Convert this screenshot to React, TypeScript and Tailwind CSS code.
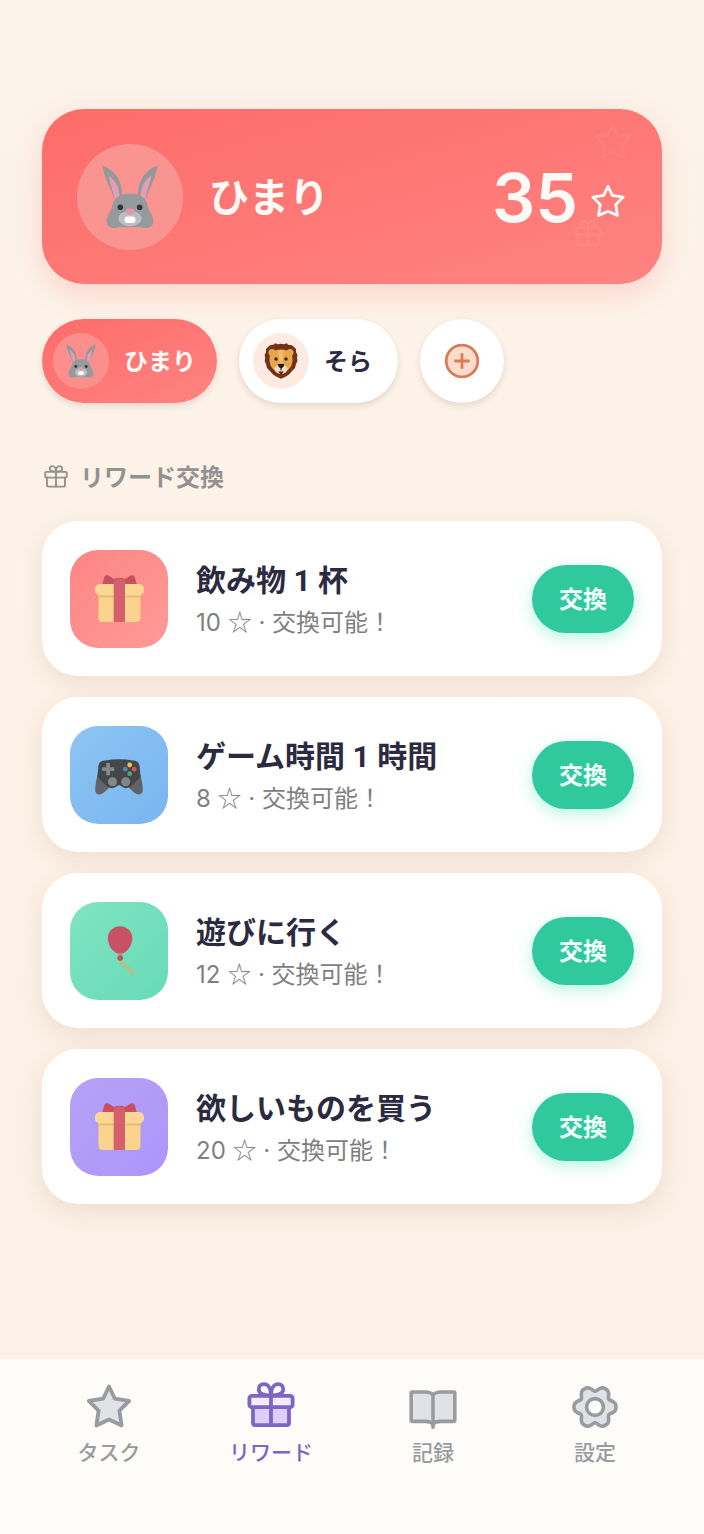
import clsx from 'clsx'
import { ReactNode, useState } from 'react'

type IconProps = { className?: string }

const STAR =
  'M24 4.5 L29.8 16.6 L44.2 18.8 L34.4 28.6 L36.6 43.4 L24 37.6 L11.4 43.4 L13.6 28.6 L3.8 18.8 L18.2 16.6 Z'

// six soft teeth around the hub
const GEAR =
  'M' +
  Array.from({ length: 120 }, (_, i) => {
    const t = (i / 120) * Math.PI * 2
    const c = Math.cos(6 * t)
    const r = 18.4 + 2.6 * c + 0.9 * (1 - c * c)
    return `${(24 + r * Math.cos(t)).toFixed(2)} ${(25 + r * Math.sin(t)).toFixed(2)}`
  }).join('L') +
  'Z'

function StarIcon({ className }: IconProps) {
  return (
    <svg viewBox="0 0 48 48" className={className} aria-hidden="true" stroke="currentColor" strokeWidth="3.8" strokeLinejoin="round">
      <path d={STAR} />
    </svg>
  )
}

function GiftIcon({ className, lid = 'none', box = 'none' }: IconProps & { lid?: string; box?: string }) {
  return (
    <svg viewBox="0 0 48 48" className={className} aria-hidden="true" fill="none" stroke="currentColor" strokeWidth="3.8" strokeLinejoin="round" strokeLinecap="round">
      <path d="M6 25V41Q6 43.2 8.2 43.2H39.8Q42 43.2 42 41V25" fill={box} />
      <rect x="2.4" y="13.8" width="43.2" height="11.4" rx="2.4" fill={lid} />
      <path d="M24 13.5V43" />
      <path d="M24 13.5C17 13.5 11.8 11.6 11.8 7.2C11.8 4 14 2.2 16.8 2.2C21.5 2.2 24 7 24 13.5C24 7 26.5 2.2 31.2 2.2C34 2.2 36.2 4 36.2 7.2C36.2 11.6 31 13.5 24 13.5Z" />
    </svg>
  )
}

function BookIcon({ className }: IconProps) {
  return (
    <svg viewBox="0 0 48 48" className={className} aria-hidden="true" fill="#e0e2e6" stroke="currentColor" strokeWidth="3.6" strokeLinejoin="round" strokeLinecap="round">
      <path d="M24 13C22 10.5 19 10 16 10H3.5Q2.2 10 2.2 11.3V38Q2.2 39.4 3.5 39.4H16C20 39.4 22.5 40 24 42.5C25.5 40 28 39.4 32 39.4H44.5Q45.8 39.4 45.8 38V11.3Q45.8 10 44.5 10H32C29 10 26 10.5 24 13Z" />
      <path d="M24 14V45.2" />
    </svg>
  )
}

function GearIcon({ className }: IconProps) {
  return (
    <svg viewBox="0 0 48 48" className={className} aria-hidden="true" fill="#e0e2e6" stroke="currentColor" strokeWidth="3.6" strokeLinejoin="round">
      <path d={GEAR} />
      <circle cx="24" cy="25" r="8.4" fill="#fdfcf8" />
    </svg>
  )
}

function Rabbit({ className }: IconProps) {
  const ear = (
    <>
      <path d="M.3.4C6 2.5 12.5 7 16 13C19 18.5 20.6 26 20 33L12 34C10.5 26 3 16 .3.4Z" fill="#95999b" />
      <path d="M7 10.6C11 14 14.5 18 16 22.5C17 26 17.6 29 17.4 32L12.4 33.5C11.5 27 7.8 19 7 10.6Z" fill="#e59db5" />
    </>
  )
  return (
    <svg viewBox="0 0 56 64" className={className} aria-hidden="true">
      {ear}
      <g transform="translate(56 0) scale(-1 1)">{ear}</g>
      <path d="M28 28.6C36 28.6 41.5 31.5 44.2 36.5C46 40 45.5 43 48 47C50.5 50.5 51.8 53 51.2 57.5C50.5 63.5 43 63.8 38 62H18C13 63.8 5.5 63.5 4.8 57.5C4.2 53 5.5 50.5 8 47C10.5 43 10 40 11.8 36.5C14.5 31.5 20 28.6 28 28.6Z" fill="#959a9c" />
      <ellipse cx="28" cy="53.5" rx="11.5" ry="7.8" fill="#bcbec0" />
      <circle cx="18.3" cy="42.3" r="2.8" fill="#343638" />
      <circle cx="37.7" cy="42.3" r="2.8" fill="#343638" />
      <path d="M23.5 45.5Q24 43.5 28 43.5T32.5 45.5Q32 49.5 28 49.5T23.5 45.5Z" fill="#e795ae" />
      <rect x="22.5" y="51.5" width="11" height="6.5" rx="3" fill="#fff" />
    </svg>
  )
}

function Lion({ className }: IconProps) {
  return (
    <svg viewBox="0 0 34 36" className={className} aria-hidden="true">
      <path d="M10 1.5L11 .3L14 1.3L17 .8L20 1.3L23 .3L24 1.8L28 2.3L30 4L32 6L32 9L33.5 12L33 15L33.5 18L32 21L31 25L28 28L25 31.5L21 34L17 35.7L13 34L9 31.5L6 28L3 25L2 21L.7 18L1.2 15L.6 12L2 9L2 6L4 4L6 2.3Z" fill="#713317" />
      <circle cx="8" cy="9.5" r="3.5" fill="#e6a64c" />
      <circle cx="26" cy="9.5" r="3.5" fill="#e6a64c" />
      <path d="M17 6.5C25 6.5 28.5 10 28.5 16C28.5 22 26.5 28 17 30C7.5 28 5.5 22 5.5 16C5.5 10 9 6.5 17 6.5Z" fill="#e6a64c" />
      <path d="M14.5 7.5H19.5L18.5 20H15.5Z" fill="#f1bd67" />
      <path d="M17 22C20.5 22 23.5 23.5 23.5 26C23.5 28.5 20.5 31 17 31S10.5 28.5 10.5 26C10.5 23.5 13.5 22 17 22Z" fill="#f5dec1" />
      <path d="M14 28.5H20L17 32Z" fill="#5a2612" />
      <circle cx="12" cy="16" r="1.7" fill="#33261e" />
      <circle cx="22" cy="16" r="1.7" fill="#33261e" />
      <path d="M13.8 21H20.2Q20.2 24 17 25.5Q13.8 24 13.8 21Z" fill="#241b1a" />
      <path d="M17 25V27.5" stroke="#241b1a" strokeWidth="1" />
    </svg>
  )
}

function Present({ className }: IconProps) {
  return (
    <svg viewBox="0 0 49 47" className={className} aria-hidden="true">
      <path d="M7 10L9.5 1.5Q11 -.5 13.5 .5L19 4Q24.5 1.5 30 4L35.5 .5Q38 -.5 39.5 1.5L42 10Z" fill="#c9505f" />
      <path d="M3.5 18H45.5V42.5Q45.5 47 41 47H8Q3.5 47 3.5 42.5Z" fill="#fad48c" />
      <path d="M3.5 19H45.5V22.5H3.5Z" fill="#e9bb7a" />
      <rect y="9" width="49" height="11.5" rx="5" fill="#fad793" />
      <path d="M18.7 5Q24.5 2 30 5V47H18.7Z" fill="#d55f6d" />
    </svg>
  )
}

function Gamepad({ className }: IconProps) {
  return (
    <svg viewBox="0 0 48 36" className={className} aria-hidden="true">
      <path d="M3.5 13C1.5 19 .2 26 .2 31C.2 36.5 6 36.5 9.5 33L17 26H31L38.5 33C42 36.5 47.8 36.5 47.8 31C47.8 26 46.5 19 44.5 13Z" fill="#606468" />
      <path d="M10 1.5Q17 .3 24 .3T38 1.5Q44 2 44.6 7L45.5 18L36 27.5Q30 31 26 27L24 26L22 27Q18 31 12 27.5L2.5 18L3.4 7Q4 2 10 1.5Z" fill="#43474a" />
      <path d="M11.2 4H15V8.2H19.2V12H15V16.2H11.2V12H7V8.2H11.2Z" fill="#85888a" />
      <circle cx="34.7" cy="6" r="2.4" fill="#efbd50" />
      <circle cx="39.2" cy="10.2" r="2.4" fill="#d75456" />
      <circle cx="30.3" cy="10.2" r="2.4" fill="#4e86b5" />
      <circle cx="34.7" cy="14.7" r="2.4" fill="#55a56c" />
      <circle cx="17.5" cy="22.7" r="4.5" fill="#85888a" />
      <circle cx="30.7" cy="22.7" r="4.5" fill="#85888a" />
    </svg>
  )
}

function Balloon({ className }: IconProps) {
  return (
    <svg viewBox="0 0 50 50" className={className} aria-hidden="true">
      <path d="M26.5 33C26 37 29 39 32 40.5C36 42.5 37 45 39.5 49" fill="none" stroke="#b9bd84" strokeWidth="3.4" />
      <path d="M26 .3C33.5 .3 38.3 6 38.3 12.5C38.3 19.5 32.5 27.8 26 27.8S13.8 19.5 13.8 12.5C13.8 6 18.5 .3 26 .3Z" fill="#c85163" />
      <path d="M24 28.7H28.5" stroke="#c99a78" strokeWidth="1.5" />
      <circle cx="26.2" cy="32" r="2.8" fill="#b9525c" />
    </svg>
  )
}

function PlusCircle({ className }: IconProps) {
  return (
    <svg viewBox="0 0 36 36" className={className} aria-hidden="true" stroke="#d97c55" strokeWidth="2.8">
      <circle cx="18" cy="18" r="15.8" fill="#fcddcd" />
      <path d="M18 10.3V25.7M10.3 18H25.7" />
    </svg>
  )
}

const children = [
  { id: 'himari', name: 'ひまり', icon: <Rabbit className="h-[34px] w-[30px]" /> },
  { id: 'sora', name: 'そら', icon: <Lion className="h-9 w-[34px]" /> },
]

const rewards = [
  {
    name: '飲み物 1 杯',
    cost: 10,
    icon: <Present className="h-[47px] w-[49px]" />,
    tile: 'from-[#fc8684] to-[#fe9a98]',
  },
  {
    name: 'ゲーム時間 1 時間',
    cost: 8,
    icon: <Gamepad className="mt-1 h-9 w-12" />,
    tile: 'from-[#8cc5f3] to-[#79b5f0]',
  },
  {
    name: '遊びに行く',
    cost: 12,
    icon: <Balloon className="size-[50px]" />,
    tile: 'from-[#80e4c2] to-[#67dab7]',
  },
  {
    name: '欲しいものを買う',
    cost: 20,
    icon: <Present className="h-[47px] w-[49px]" />,
    tile: 'from-[#b5a2f6] to-[#ac95fb]',
  },
]

const navItems: { name: string; icon: ReactNode; active?: boolean }[] = [
  { name: 'タスク', icon: <StarIcon className="size-12 fill-[#e0e2e6]" /> },
  { name: 'リワード', icon: <GiftIcon className="size-12" lid="#f4ecfb" box="#dccffa" />, active: true },
  { name: '記録', icon: <BookIcon className="size-12" /> },
  { name: '設定', icon: <GearIcon className="size-12" /> },
]

export default function App() {
  const [selected, setSelected] = useState('himari')

  return (
    <div className="flex min-h-screen flex-col bg-linear-to-b from-[#fcf3e9] via-[#fdf2e7] to-[#fbf0e6] font-['Noto_Sans','Noto_Sans_CJK_JP',sans-serif] text-[#2b2a40]">
      <main className="flex-1 px-[42px] pt-[109px] pb-10">
        <section className="relative flex h-[175px] items-center rounded-[42px] bg-linear-to-br from-[#fd6c69] to-[#fe8382] px-[35px] text-[#fffaf6] shadow-[0_10px_28px_rgba(255,107,107,0.22)]">
          <StarIcon className="absolute top-3 right-[29px] size-10 fill-none text-[#fa8985] opacity-50" />
          <GiftIcon className="absolute right-[60px] bottom-9 size-7 text-[#fa9590] opacity-40" />
          <div className="flex size-[106px] items-center justify-center rounded-full bg-[#f99490]">
            <Rabbit className="h-16 w-14" />
          </div>
          <h1 className="ml-[26px] text-[40px] leading-none font-bold">{children.find((c) => c.id === selected)?.name}</h1>
          <div className="ml-auto flex items-center gap-3 pr-px">
            <span className="font-['Inter',sans-serif] text-[68px] leading-none font-semibold">35</span>
            <StarIcon className="mt-2 size-9 fill-none" />
          </div>
        </section>

        <div className="mt-[35px] flex gap-[22px]">
          {children.map((child) => (
            <button
              key={child.id}
              type="button"
              aria-pressed={selected === child.id}
              onClick={() => setSelected(child.id)}
              className={clsx(
                'flex h-[84px] items-center rounded-full text-2xl font-bold shadow-[0_3px_6px_rgba(90,50,30,0.14)]',
                selected === child.id
                  ? 'gap-[15px] bg-linear-to-br from-[#fd6c69] to-[#fe8382] pr-[21px] pl-[11px] text-[#fffaf6]'
                  : 'gap-[15px] bg-white pr-[26px] pl-3.5',
              )}
            >
              <span
                className={clsx(
                  'flex size-14 items-center justify-center rounded-full',
                  selected === child.id ? 'bg-[#fb8f8c]' : 'bg-[#fdebe1]',
                )}
              >
                {child.icon}
              </span>
              {child.name}
            </button>
          ))}
          <button
            type="button"
            aria-label="追加"
            className="flex size-[84px] items-center justify-center rounded-full bg-white shadow-[0_3px_6px_rgba(90,50,30,0.14)]"
          >
            <PlusCircle className="size-9" />
          </button>
        </div>

        <h2 className="mt-14 flex h-9 items-center gap-3 pl-0.5 text-2xl font-bold text-[#949291]">
          <GiftIcon className="size-6" />
          リワード交換
        </h2>

        <ul className="mt-[26px] flex flex-col gap-[21px]">
          {rewards.map((item) => (
            <li
              key={item.name}
              className="flex h-[155px] items-center gap-7 rounded-[36px] bg-white px-7 shadow-[0_7px_24px_rgba(120,60,30,0.11)]"
            >
              <div className={clsx('flex size-[98px] items-center justify-center rounded-[28px] bg-linear-to-br', item.tile)}>
                {item.icon}
              </div>
              <div className="flex-1 pt-1.5">
                <h3 className="font-['Roboto','Noto_Sans_CJK_JP',sans-serif] text-[30px] leading-10 font-bold">{item.name}</h3>
                <p className="mt-0.5 font-['Inter','Noto_Sans_CJK_JP',sans-serif] text-2xl leading-10 text-[#807f80]">
                  {item.cost} <span className="font-['Noto_Sans_CJK_JP',sans-serif] leading-none">☆</span> · 交換可能！
                </p>
              </div>
              <button
                type="button"
                className="h-[68px] w-[102px] rounded-full bg-[#30c99e] text-2xl font-bold text-[#f2fffa] shadow-[0_5px_16px_rgba(70,225,175,0.38)]"
              >
                交換
              </button>
            </li>
          ))}
        </ul>
      </main>

      <nav className="grid h-[175px] grid-cols-4 bg-[#fdfcf8] px-7 pt-[23px]">
        {navItems.map((item) => (
          <a
            key={item.name}
            href="#"
            aria-current={item.active ? 'page' : undefined}
            className={clsx(
              'flex flex-col items-center gap-1.5 text-[21px] leading-8 font-medium',
              item.active ? 'text-[#7d65c4]' : 'text-[#989ca0]',
            )}
          >
            {item.icon}
            {item.name}
          </a>
        ))}
      </nav>
    </div>
  )
}
